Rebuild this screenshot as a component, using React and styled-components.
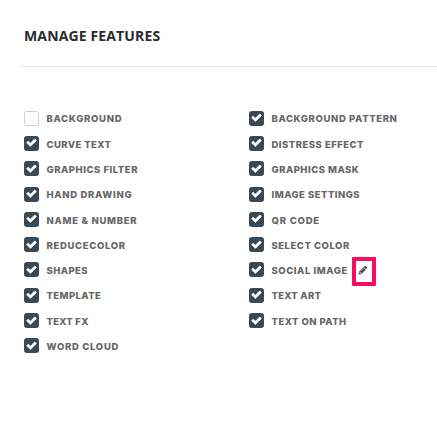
import React from "react";
import styled, { createGlobalStyle } from "styled-components";

const GlobalStyle = createGlobalStyle`
  body { margin: 0; background: #fff; overflow: hidden; }
  * { box-sizing: border-box; }
`;

const Page = styled.main`
  width: 437px;
  height: 423px;
  background: #fff;
  overflow: hidden;
`;

const Header = styled.header`
  height: 67px;
  margin-left: 20px;
  padding: 26px 4px 0;
  border-bottom: 1px solid #e8e8e8;
`;

const Title = styled.h1`
  margin: 0;
  font: 700 14px/20px "Open Sans", sans-serif;
  letter-spacing: 0.14px;
  color: #2a2c2e;
  white-space: nowrap;
`;

const Columns = styled.div`
  display: grid;
  grid-template-columns: 225px 188px;
  padding: 38.5px 0 0 24px;
`;

const Column = styled.ul`
  list-style: none;
  margin: 0;
  padding: 0;
`;

const Row = styled.li`
  display: flex;
  align-items: center;
  height: 25.3px;
`;

const Box = styled.span`
  display: flex;
  align-items: center;
  justify-content: center;
  flex: none;
  width: 15px;
  height: 15px;
  padding-bottom: 1px;
  border-radius: 2.5px;
  border: 1px solid ${(p) => (p.$checked ? "#3b4752" : "#cfcfcf")};
  background: ${(p) => (p.$checked ? "#3b4752" : "#fff")};
`;

const CheckIcon = styled.svg`
  flex: none;
  width: 11px;
  height: 11px;
  fill: #fff;
  stroke: #fff;
  stroke-width: 110;
`;

const Label = styled.span`
  margin-left: 7.5px;
  padding-top: 2.4px;
  font: 800 9.5px/14px Inter, sans-serif;
  letter-spacing: ${(p) => p.$tracking}px;
  color: #666;
  white-space: nowrap;
`;

const EditButton = styled.button`
  display: flex;
  align-items: center;
  justify-content: center;
  width: 24px;
  height: 29px;
  margin: 3px 61px 0 auto;
  padding: 0 2px 3px 0;
  border: 4px solid #fc0d5b;
  border-radius: 1px;
  background: #fff;
`;

const PencilIcon = styled.svg`
  flex: none;
  width: 10px;
  height: 10px;
  fill: #4a4a4a;
`;

const LEFT = [
  ["BACKGROUND", 0.7, false],
  ["CURVE TEXT", 0.42],
  ["GRAPHICS FILTER", 0.53],
  ["HAND DRAWING", 0.68],
  ["NAME & NUMBER", 0.71],
  ["REDUCECOLOR", 0.68],
  ["SHAPES", 0.43],
  ["TEMPLATE", 0.42],
  ["TEXT FX", 0.25],
  ["WORD CLOUD", 0.7],
];

const RIGHT = [
  ["BACKGROUND PATTERN", 0.62],
  ["DISTRESS EFFECT", 0.49],
  ["GRAPHICS MASK", 0.48],
  ["IMAGE SETTINGS", 0.48],
  ["QR CODE", 0.8],
  ["SELECT COLOR", 0.52],
  ["SOCIAL IMAGE", 0.55, true, true],
  ["TEXT ART", 0.25],
  ["TEXT ON PATH", 0.46],
];

function Feature({ name, tracking, checked, editable }) {
  return (
    <Row>
      <Box $checked={checked} role="checkbox" aria-checked={checked} aria-label={name}>
        {checked && (
          <CheckIcon viewBox="0 0 1792 1792">
            <path d="M1671 566q0 40-28 68l-724 724-136 136q-28 28-68 28t-68-28l-136-136-362-362q-28-28-28-68t28-68l136-136q28-28 68-28t68 28l294 295 656-657q28-28 68-28t68 28l136 136q28 28 28 68z" />
          </CheckIcon>
        )}
      </Box>
      <Label $tracking={tracking}>{name}</Label>
      {editable && (
        <EditButton aria-label="Edit">
          <PencilIcon viewBox="0 0 1792 1792">
            <path d="M491 1536l91-91-235-235-91 91v107h128v128h107zm523-928q0-22-22-22-10 0-17 7l-542 542q-7 7-7 17 0 22 22 22 10 0 17-7l542-542q7-7 7-17zm-54-192l416 416-832 832h-416v-416zm683 96q0 53-37 90l-166 166-416-416 166-165q36-38 90-38 53 0 91 38l235 234q37 39 37 91z" />
          </PencilIcon>
        </EditButton>
      )}
    </Row>
  );
}

function FeatureColumn({ items }) {
  return (
    <Column>
      {items.map(([name, tracking, checked = true, editable = false]) => (
        <Feature key={name} name={name} tracking={tracking} checked={checked} editable={editable} />
      ))}
    </Column>
  );
}

export default function App() {
  return (
    <Page>
      <GlobalStyle />
      <Header>
        <Title>MANAGE FEATURES</Title>
      </Header>
      <Columns>
        <FeatureColumn items={LEFT} />
        <FeatureColumn items={RIGHT} />
      </Columns>
    </Page>
  );
}
